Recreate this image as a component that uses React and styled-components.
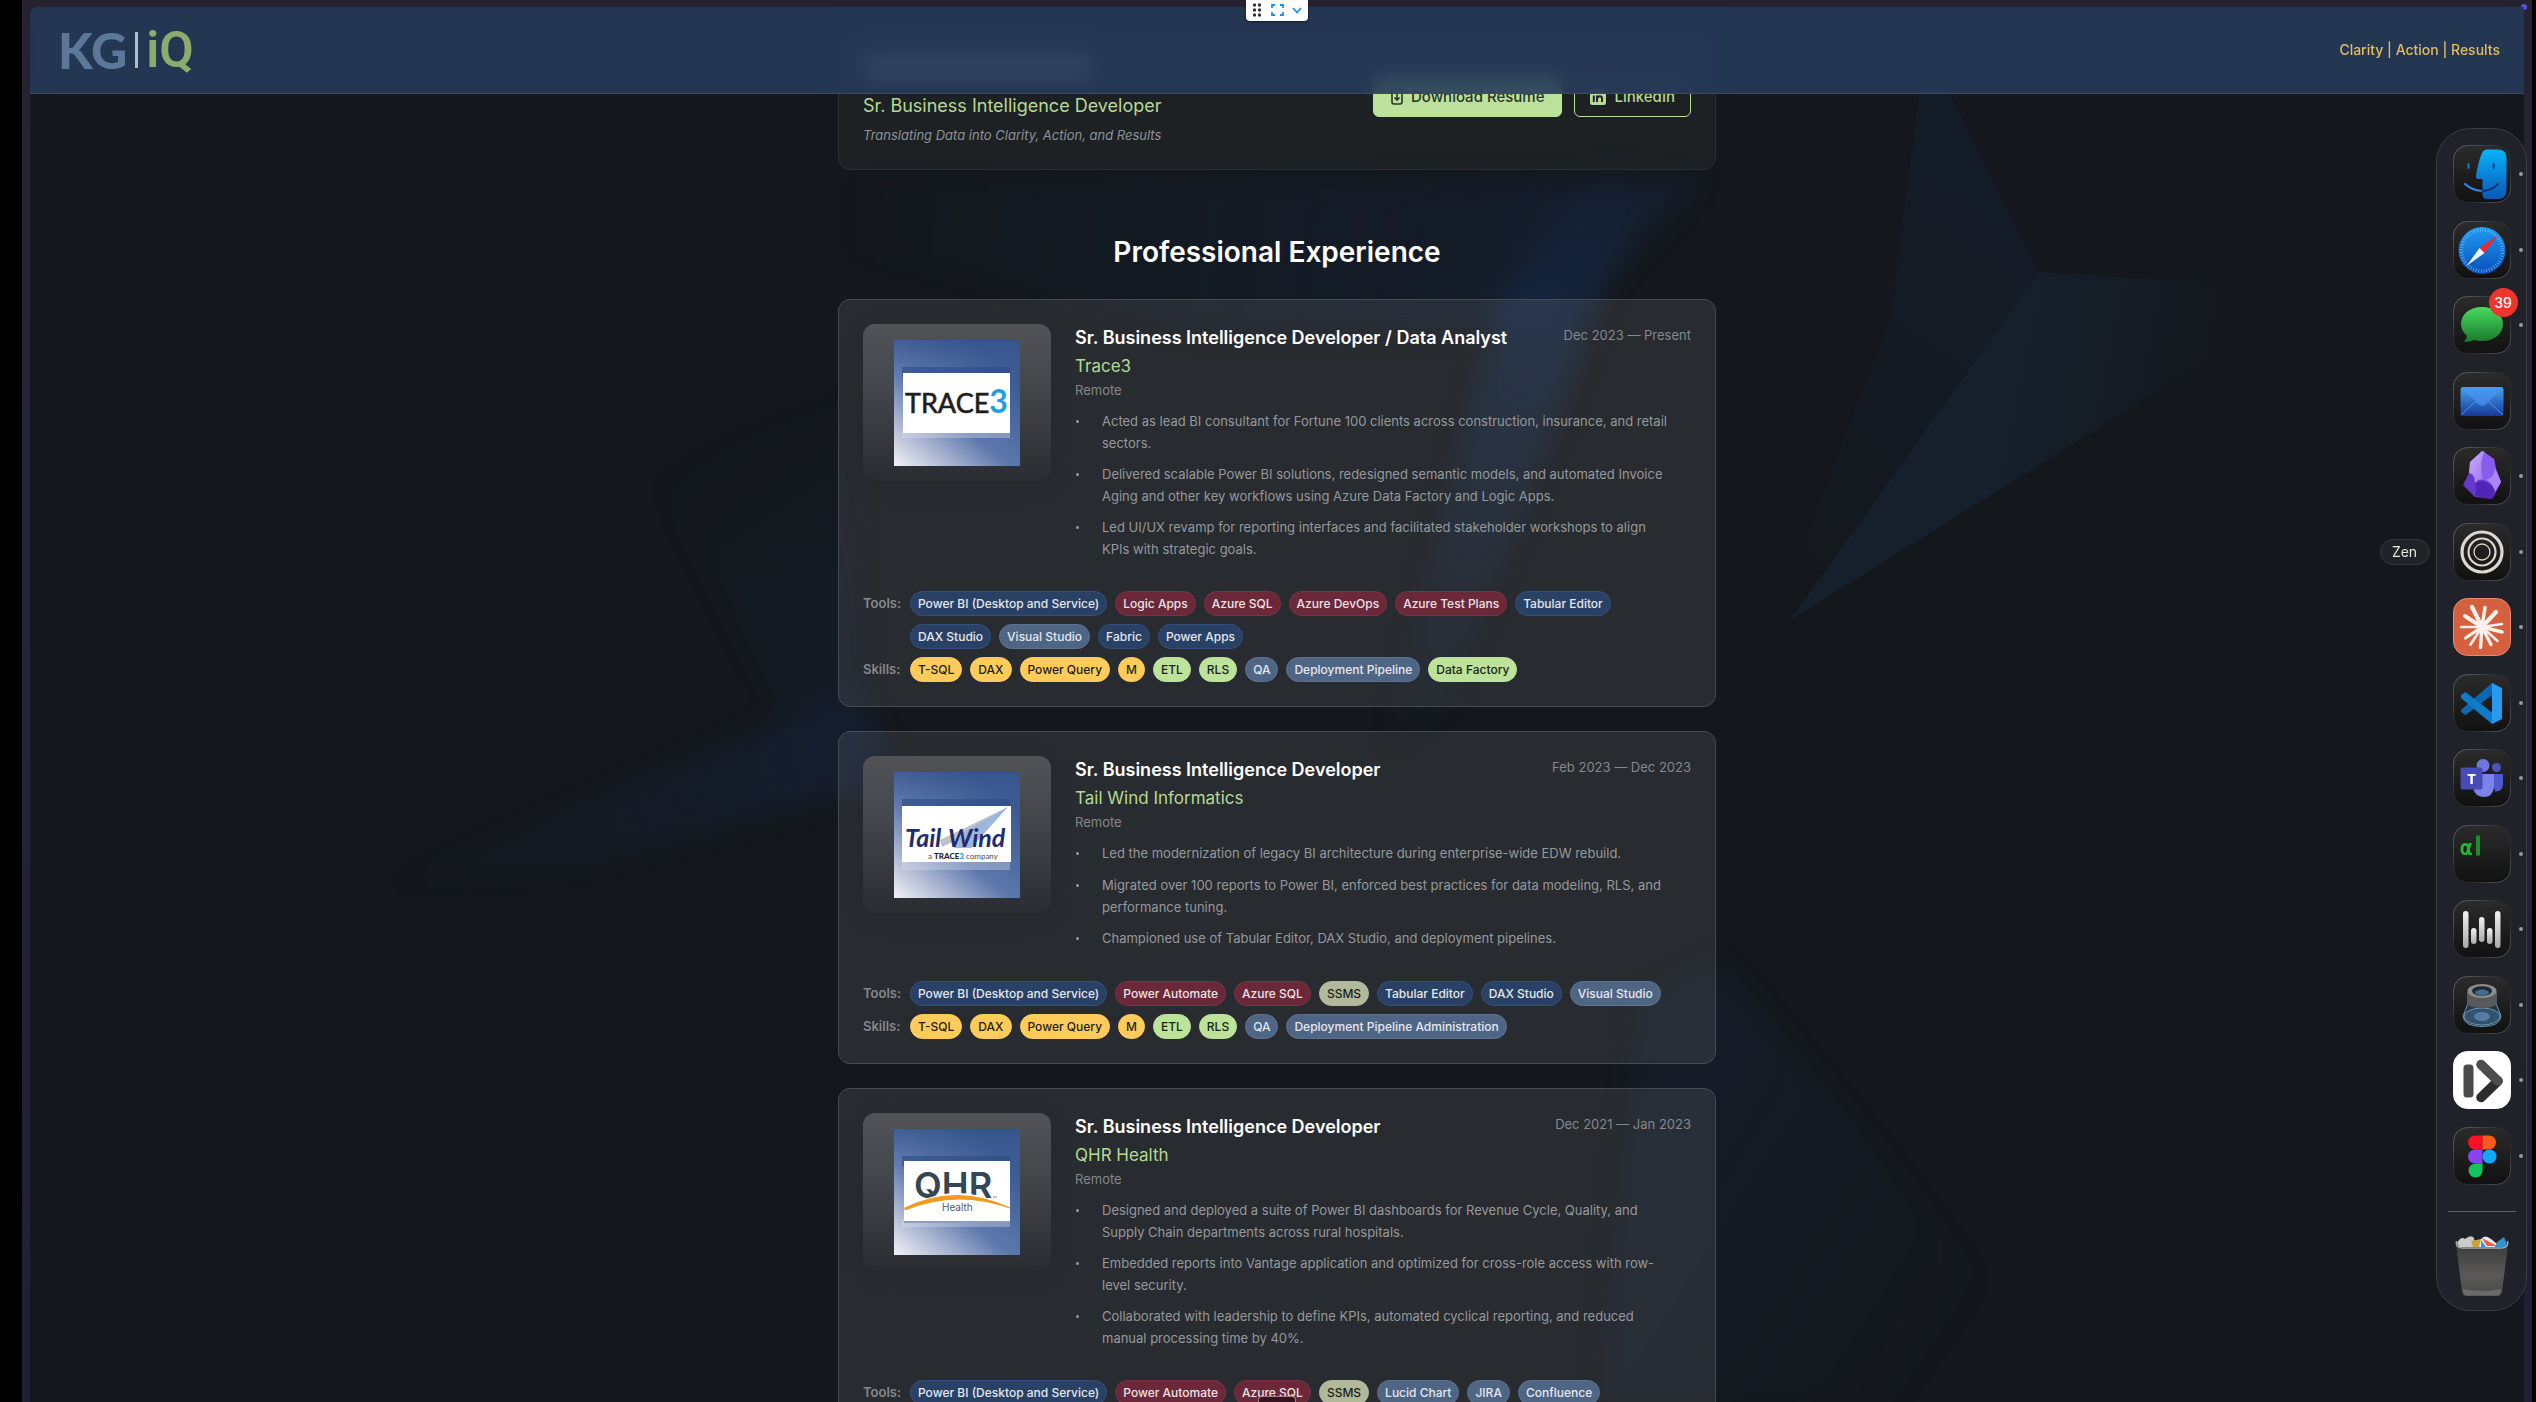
import React from "react";
import styled, { createGlobalStyle, css } from "styled-components";

const GlobalStyle = createGlobalStyle`
  * { box-sizing: border-box; }
  body {
    margin: 0;
    background: #000;
    overflow: hidden;
    font-family: Inter, "Liberation Sans", sans-serif;
    -webkit-font-smoothing: antialiased;
  }
  h1, h2, h3, p, ul { margin: 0; padding: 0; }
  ul { list-style: none; }
`;

/* ---------- window frame ---------- */

const Screen = styled.div`
  display: flex;
  height: 100vh;
  padding: 0 4px 0 22px;
  background: #000;
  overflow: hidden;
`;

const Frame = styled.div`
  flex: 1;
  display: flex;
  padding: 7px 8px 0;
  background: linear-gradient(180deg, #26222f, #252338 40%, #211f33);
`;

const Page = styled.div`
  position: relative;
  flex: 1;
  min-width: 0;
  overflow: hidden;
  border-top-left-radius: 6px;
  background: #14181c;
`;

const Backdrop = styled.svg`
  position: absolute;
  inset: 0;
  width: 100%;
  height: 100%;
`;

const WindowTab = styled.div`
  position: fixed;
  top: 0;
  left: 50%;
  transform: translateX(-22px);
  display: flex;
  z-index: 5;
  filter: drop-shadow(0 1px 1px rgba(0, 0, 0, 0.5));
`;

const CornerDot = styled.span`
  position: fixed;
  top: 4px;
  right: 9px;
  width: 6px;
  height: 6px;
  border-radius: 50%;
  background: #5b50e6;
`;

const CaptureHandle = styled.span`
  position: fixed;
  left: 50%;
  bottom: 0;
  width: 38px;
  height: 6px;
  margin-left: -10px;
  border: 1px solid #a08088;
  border-bottom: 0;
  border-radius: 4px 4px 0 0;
  background: #35121d;
`;

/* ---------- header ---------- */

const Header = styled.header`
  position: absolute;
  inset: 0 0 auto 0;
  z-index: 2;
  height: 87px;
  padding: 0 24px 0 28px;
  display: flex;
  align-items: center;
  justify-content: space-between;
  border-bottom: 1px solid #3c4b5e;
  background: rgba(38, 58, 90, 0.88);
  backdrop-filter: blur(10px);
`;

const Brand = styled.a`
  display: flex;
  align-items: center;
  color: #5b7898;
  font: 900 50px/60px Lato, sans-serif;
  text-decoration: none;
`;

const BrandBar = styled.span`
  width: 3px;
  height: 36px;
  margin: 0 8px;
  background: #b4bcc8;
`;

const BrandAccent = styled.span`
  color: #8cab6c;
  font-family: Roboto, sans-serif;
  font-weight: 600;
`;

const Motto = styled.p`
  color: #e3bd5f;
  font-size: 14px;
  font-weight: 500;
  line-height: 20px;
`;

/* ---------- page column ---------- */

const Column = styled.main`
  position: relative;
  max-width: 878px;
  margin: 0 auto;
  padding-top: 16px;
`;

const Hero = styled.section`
  display: flex;
  align-items: center;
  justify-content: space-between;
  padding: 24px;
  border: 1px solid #2c3036;
  border-radius: 12px;
  background: rgba(255, 255, 255, 0.04);
`;

const NameSmear = styled.div`
  width: 230px;
  height: 26px;
  margin: 6px 0 12px;
  border-radius: 8px;
  background: rgba(255, 255, 255, 0.45);
`;

const Role = styled.p`
  color: #b5da92;
  font-size: 18px;
  line-height: 28px;
`;

const Tagline = styled.p`
  margin-top: 5px;
  color: #8f9296;
  font-size: 13px;
  font-style: italic;
  line-height: 20px;
`;

const Actions = styled.div`
  display: flex;
  gap: 12px;
`;

const ActionButton = styled.button`
  display: flex;
  align-items: center;
  gap: 8px;
  height: 40px;
  padding: 0 ${(p) => (p.$filled ? 17 : 15)}px;
  border: 1px solid #bbe19a;
  border-radius: 6px;
  background: ${(p) => (p.$filled ? "#bbe19a" : "transparent")};
  color: ${(p) => (p.$filled ? "#26342c" : "#b5da92")};
  font: 500 15px/24px Inter, sans-serif;
`;

const SectionTitle = styled.h2`
  margin: 64px 0 29px;
  color: #fff;
  font-size: 28px;
  font-weight: 600;
  line-height: 36px;
  text-align: center;
`;

const Jobs = styled.div`
  display: flex;
  flex-direction: column;
  gap: 24px;
`;

const Card = styled.article`
  padding: 24px;
  border: 1px solid #464b51;
  border-radius: 12px;
  background: rgba(255, 255, 255, 0.085);
`;

const CardTop = styled.div`
  display: grid;
  grid-template-columns: 188px minmax(0, 1fr);
  align-items: start;
  gap: 24px;
`;

const LogoTile = styled.div`
  display: flex;
  justify-content: center;
  padding: 16px 0;
  border-radius: 12px;
  background: linear-gradient(180deg, #515357 0%, #43464b 40%, rgba(56, 58, 64, 0.5) 85%, rgba(50, 53, 58, 0) 100%);
  box-shadow: 0 4px 24px rgba(0, 0, 0, 0.08);
`;

const JobHead = styled.div`
  display: flex;
  justify-content: space-between;
  gap: 16px;
`;

const JobTitle = styled.h3`
  color: #fff;
  font-size: 18px;
  font-weight: 600;
  line-height: 28px;
`;

const Period = styled.span`
  color: #85888c;
  font-size: 13px;
  line-height: 22px;
`;

const Company = styled.p`
  color: #b5da92;
  font-size: 17px;
  line-height: 28px;
`;

const Place = styled.p`
  color: #85888c;
  font-size: 13px;
  line-height: 20px;
`;

const Points = styled.ul`
  display: flex;
  flex-direction: column;
  gap: 9px;
  margin-top: 10px;
  padding-right: 18px;
`;

const Point = styled.li`
  display: grid;
  grid-template-columns: 27px 1fr;
  color: #96999c;
  font-size: 13px;
  line-height: 22px;

  &::before {
    content: "";
    width: 3px;
    height: 3px;
    margin: 10px 1px;
    border-radius: 50%;
    background: #96999c;
  }
`;

const TagGroups = styled.div`
  display: flex;
  flex-direction: column;
  gap: 8px;
  margin-top: 31px;
`;

const TagRow = styled.div`
  display: grid;
  grid-template-columns: 47px minmax(0, 1fr);
`;

const TagLabel = styled.span`
  color: #85888c;
  font-size: 13px;
  font-weight: 600;
  line-height: 25px;
`;

const Tags = styled.div`
  display: flex;
  flex-wrap: wrap;
  gap: 8px;
`;

const tones = {
  navy: ["#2a4166", "#e4e8ee", "#32507c"],
  wine: ["#6b2839", "#eee2e6", "#7a3345"],
  slate: ["#4f6584", "#e4e8ee", "#5d7291"],
  gold: ["#ffcb5b", "#221d12", "#ffcb5b"],
  green: ["#bde39a", "#1b2416", "#bde39a"],
  sage: ["#b2b89a", "#1d1f18", "#b2b89a"],
};

const Tag = styled.span`
  padding: 0 7px;
  border: 1px solid ${(p) => tones[p.$tone][2]};
  border-radius: 13px;
  background: ${(p) => tones[p.$tone][0]};
  color: ${(p) => tones[p.$tone][1]};
  font-size: 12px;
  font-weight: 500;
  line-height: 23px;
  white-space: nowrap;
`;

/* ---------- dock ---------- */

const Dock = styled.nav`
  position: fixed;
  top: 128px;
  right: 9px;
  z-index: 4;
  width: 91px;
  height: 1183px;
  padding: 16px 15px 0 15px;
  display: flex;
  flex-direction: column;
  align-items: center;
  border: 1px solid #3a3d42;
  border-radius: 34px;
  background: #1f2228;
`;

const DockApps = styled.div`
  display: flex;
  flex-direction: column;
  justify-content: space-between;
  height: 1040px;
`;

const DockButton = styled.button`
  position: relative;
  width: 58px;
  height: 58px;
  padding: 0;
  border: 0;
  background: none;

  svg { display: block; overflow: visible; }

  ${(p) =>
    p.$running &&
    css`
      &::after {
        content: "";
        position: absolute;
        top: 27px;
        right: -12px;
        width: 4px;
        height: 4px;
        border-radius: 50%;
        background: #96989c;
      }
    `}
`;

const Badge = styled.span`
  position: absolute;
  top: -8px;
  right: -7px;
  width: 29px;
  height: 29px;
  border-radius: 50%;
  background: #ec352d;
  color: #fff;
  font: 500 14px/29px Inter, sans-serif;
  text-align: center;
`;

const DockRule = styled.hr`
  width: 68px;
  height: 1px;
  margin: 26px 0 23px;
  border: 0;
  background: #5b5e62;
  flex: none;
`;

const DockTip = styled.span`
  position: absolute;
  top: 16px;
  right: 81px;
  width: 50px;
  height: 26px;
  border: 1px solid #34383c;
  border-radius: 13px;
  background: #202327;
  color: #e6e6e6;
  font: 400 14px/24px Inter, sans-serif;
  text-align: center;
`;

/* ---------- logos ---------- */

const LogoPlate = ({ id, children }) => (
  <svg width="126" height="126" viewBox="0 0 126 126" role="img" aria-label={id}>
    <defs>
      <linearGradient id={`${id}-bg`} x1="0" y1="1" x2="0.75" y2="0.1">
        <stop offset="0" stopColor="#f2f2f8" />
        <stop offset="0.22" stopColor="#b3bcd6" />
        <stop offset="0.5" stopColor="#5d78ad" />
        <stop offset="1" stopColor="#3a5a91" />
      </linearGradient>
      <linearGradient id={`${id}-top`} x1="0" y1="0" x2="0" y2="1">
        <stop offset="0" stopColor="#2f4f86" />
        <stop offset="1" stopColor="#3c5c93" stopOpacity="0" />
      </linearGradient>
    </defs>
    <rect width="126" height="126" fill={`url(#${id}-bg)`} />
    <rect x="0" width="126" height="30" fill={`url(#${id}-top)`} opacity="0.5" />
    <rect x="8" y="27" width="108" height="10" fill="#2c4b80" opacity="0.6" />
    <rect x="8" y="90" width="108" height="8" fill="#dfe6f2" opacity="0.35" />
    {children}
  </svg>
);

const Trace3Logo = () => (
  <LogoPlate id="trace3">
    <rect x="9" y="33" width="107" height="60" fill="#fff" />
    <text x="11" y="73" fontFamily="Lato" fontSize="27" fill="#231c1e" stroke="#231c1e" strokeWidth="0.6">
      TRACE
      <tspan fontSize="32" fontWeight="700" fill="#1ba1e2" stroke="none">3</tspan>
    </text>
  </LogoPlate>
);

const TailWindLogo = () => (
  <LogoPlate id="tailwind">
    <rect x="8" y="34" width="109" height="56" fill="#fff" />
    <path d="M114 35 L46 68 L48 75 L84 58 Z" fill="#bfc1c9" />
    <path d="M114 35 L66 62 L60 76 L77 76 Z" fill="#9db7dc" />
    <text x="11" y="75" fontFamily="Lato" fontSize="25" fontWeight="700" fontStyle="italic" fill="#232a6e">Tail</text>
    <text x="54" y="75" fontFamily="Lato" fontSize="25" fontWeight="700" fontStyle="italic" fill="#232a6e">Wind</text>
    <text x="34" y="87" fontFamily="Lato" fontSize="8" fill="#4b4b52">
      a <tspan fontWeight="900" fill="#2b2527">TRACE</tspan>
      <tspan fontWeight="900" fill="#1ba1e2">3</tspan> company
    </text>
  </LogoPlate>
);

const QhrLogo = () => (
  <LogoPlate id="qhr">
    <rect x="10" y="32" width="106" height="60" fill="#fff" />
    <text x="20" y="69" fontFamily="Inter" fontSize="36" fontWeight="600" fill="#344754">QHR</text>
    <path d="M11 80 Q63 48 116 80 L116 94 H11 Z" fill="#fff" />
    <path d="M11 79 Q62 54 116 79 Q62 60 11 81 Z" fill="#f29a1f" stroke="#f29a1f" strokeWidth="1.2" />
    <rect x="10" y="81" width="106" height="11" fill="#fff" />
    <rect x="10" y="92" width="106" height="2" fill="#8d9cc0" />
    <text x="48" y="82" fontFamily="Inter" fontSize="10" fill="#4d5a66">Health</text>
    <path d="M99 68 h4" stroke="#8b949c" strokeWidth="1" />
  </LogoPlate>
);

/* ---------- dock drawings ---------- */

const AppTile = ({ fill = "url(#tileDark)", edge = "url(#tileEdge)", children }) => (
  <svg width="58" height="58" viewBox="0 0 58 58" aria-hidden="true">
    <rect x="0.5" y="0.5" width="57" height="57" rx="14" fill={fill} stroke={edge} />
    {children}
  </svg>
);

const DockDefs = () => (
  <svg width="0" height="0" style={{ position: "absolute" }} aria-hidden="true">
    <defs>
      <linearGradient id="tileDark" x1="0" y1="0" x2="0" y2="1">
        <stop offset="0" stopColor="#2b2b2c" />
        <stop offset="1" stopColor="#111112" />
      </linearGradient>
      <linearGradient id="tileEdge" x1="0" y1="0" x2="1" y2="1">
        <stop offset="0" stopColor="#66686b" />
        <stop offset="0.4" stopColor="#2a2c2f" />
        <stop offset="0.7" stopColor="#2a2c2f" />
        <stop offset="1" stopColor="#5c5e61" />
      </linearGradient>
      <linearGradient id="finder" x1="0" y1="0" x2="0" y2="1">
        <stop offset="0" stopColor="#05b4fb" />
        <stop offset="1" stopColor="#0d56b6" />
      </linearGradient>
      <linearGradient id="safari" x1="0" y1="0" x2="0" y2="1">
        <stop offset="0" stopColor="#1d9bf5" />
        <stop offset="1" stopColor="#0a50b8" />
      </linearGradient>
      <linearGradient id="bubble" x1="0" y1="0" x2="0" y2="1">
        <stop offset="0" stopColor="#46dc5f" />
        <stop offset="1" stopColor="#1b7a2c" />
      </linearGradient>
      <linearGradient id="mail" x1="0" y1="0" x2="0" y2="1">
        <stop offset="0" stopColor="#46a3ee" />
        <stop offset="1" stopColor="#17389a" />
      </linearGradient>
      <linearGradient id="bars" x1="0" y1="0" x2="0" y2="1">
        <stop offset="0" stopColor="#f2f2f2" />
        <stop offset="1" stopColor="#a9a9a9" />
      </linearGradient>
      <linearGradient id="bin" x1="0" y1="0" x2="0" y2="1">
        <stop offset="0" stopColor="#3c3c3d" />
        <stop offset="0.6" stopColor="#5a5958" />
        <stop offset="1" stopColor="#4a4a4a" />
      </linearGradient>
      <linearGradient id="crystal" x1="0" y1="0" x2="1" y2="1">
        <stop offset="0" stopColor="#c9b0fb" />
        <stop offset="1" stopColor="#9a72ee" />
      </linearGradient>
    </defs>
  </svg>
);

const Finder = () => (
  <AppTile>
    <path d="M34 4.500 H46 Q53.500 5 53.500 13 V45 Q53.500 54 45 54 H34 Q29.500 54 29.500 49 V34 H25 Q22.500 33.500 23 31 Q25 17 29 8 Q30.500 4.500 34 4.500 Z" fill="url(#finder)" />
    <path d="M15.500 19 v4" stroke="#1b74c4" strokeWidth="2.200" strokeLinecap="round" />
    <path d="M40.700 19 v4" stroke="#0c3f80" strokeWidth="2.200" strokeLinecap="round" />
    <path d="M12 39 Q20 46 29.500 46" fill="none" stroke="#2b8ce0" strokeWidth="2.200" strokeLinecap="round" />
    <path d="M29.500 46 Q38 46 45 39" fill="none" stroke="#0b3874" strokeWidth="2.200" strokeLinecap="round" />
  </AppTile>
);

const Safari = () => (
  <AppTile>
    <circle cx="29" cy="29.500" r="23.500" fill="url(#safari)" />
    <circle cx="29" cy="29.500" r="20.500" fill="none" stroke="#8cc4f5" strokeWidth="3.500" strokeDasharray="0.8 1.880" opacity="0.75" />
    <path d="M45 14 L31.500 32 L26.500 27 Z" fill="#f5252c" />
    <path d="M13.500 45 L26.500 27 L31.500 32 Z" fill="#eef3f7" />
  </AppTile>
);

const Messages = () => (
  <AppTile>
    <path d="M29 11 C41 11 50 18 50 28 C50 38 41 45 29 45 C26 45 23.500 44.800 21 44 C18 45.500 14.500 46 11 45.500 C13 43.500 13.800 41.500 13.800 39.500 C10 36.500 8 32.500 8 28 C8 18 17 11 29 11 Z" fill="url(#bubble)" />
  </AppTile>
);

const Mail = () => (
  <AppTile>
    <rect x="7.500" y="15" width="43" height="29" rx="3" fill="url(#mail)" />
    <path d="M8 43 L23 29 M50 43 L35 29" stroke="#5a95ea" strokeWidth="1" />
    <path d="M8.500 15.500 L25 32 Q29 35.500 33 32 L49.500 15.500 Z" fill="#4a93f3" opacity="0.75" />
  </AppTile>
);

const Obsidian = () => (
  <AppTile>
    <path d="M29 4 L41 12 L43 22 L48 35 L41 49 L39 52 L22 50 L10 38 L16 26 L17 15 Z" fill="#6437cf" />
    <path d="M29 4 L17 15 L16 26 Q22 27 22 36 Q26 31 30 33 Q27 16 32 5 Z" fill="url(#crystal)" />
    <path d="M31 5 L41 12 L43 22 L48 35 L42 45 Q39 33 30 33 Q26 17 31 5 Z" fill="#8a5ced" />
    <path d="M42 21 L48 35 L42 45 Q40 36 33 33 Q42 30 42 21 Z" fill="#a985f6" />
    <path d="M22 36 Q35 31 42 44 L39 52 L22 49 Q24 42 22 36 Z" fill="#5125b6" />
  </AppTile>
);

const Zen = () => (
  <AppTile>
    <g fill="none" stroke="#dcd8cd">
      <circle cx="29" cy="29" r="20" strokeWidth="3.200" />
      <circle cx="29" cy="29" r="13.500" strokeWidth="2.200" />
      <circle cx="29" cy="29" r="8" strokeWidth="1.300" />
    </g>
  </AppTile>
);

const rays = [
  [19, 9, 4.2], [32, 9.5, 3.4], [43, 14, 4.2], [49, 26, 2.6],
  [49, 34, 3.4], [44.5, 43, 2.4], [38, 46.5, 3.2], [27.5, 49.5, 3.4],
  [17.5, 46.5, 2.8], [12.5, 40, 3.2], [8, 29, 2.4], [12, 18, 4],
];

const Claude = () => (
  <AppTile fill="#d5603f" edge="#e68b6f">
    <g stroke="#fbf1ea" strokeLinecap="round">
      {rays.map(([x, y, w]) => (
        <line key={`${x}-${y}`} x1="29" y1="29" x2={x} y2={y} strokeWidth={w} />
      ))}
    </g>
  </AppTile>
);

const VsCode = () => (
  <AppTile>
    <path d="M39 9 L8 36 V38 L12.500 41 L39 21 Z" fill="#0a69b4" />
    <path d="M8 21 L12.500 18 L39 38.500 V50 L8 24 Z" fill="#0f7ac8" />
    <path d="M39 9 L49 14 V45 L39 50 Z" fill="#279af0" />
  </AppTile>
);

const Teams = () => (
  <AppTile>
    <circle cx="30" cy="16.500" r="6.500" fill="#6f77e0" />
    <circle cx="43.500" cy="18.500" r="4.500" fill="#4c53bd" />
    <path d="M38 25 H50 V36 Q49 43 42 42.500 Z" fill="#5059c9" />
    <path d="M22 25 H41 V38 Q40 48 30.500 48 Q22 47.500 20.500 40 Z" fill="#7b83eb" />
    <rect x="7.500" y="18.500" width="22" height="22" rx="2" fill="#464bb5" />
    <text x="18.500" y="35" textAnchor="middle" fontFamily="Open Sans" fontWeight="700" fontSize="15" fill="#fff">T</text>
  </AppTile>
);

const Terminal = () => (
  <AppTile>
    <text x="7" y="30" fontFamily="DejaVu Sans Mono" fontWeight="700" fontSize="21" fill="#1dba2b">α</text>
    <rect x="23" y="10.500" width="4" height="20" fill="#1d8f28" />
  </AppTile>
);

const Waves = () => (
  <AppTile>
    <g fill="url(#bars)">
      <rect x="10" y="11" width="5.500" height="37" rx="2.700" />
      <rect x="18" y="28" width="5.500" height="16" rx="2.700" />
      <rect x="26" y="17" width="5.500" height="25" rx="2.700" />
      <rect x="34" y="28" width="5.500" height="16" rx="2.700" />
      <rect x="42" y="11" width="5.500" height="37" rx="2.700" />
    </g>
  </AppTile>
);

const Loupe = () => (
  <AppTile>
    <path d="M16 25 L10 40 Q11 50.500 29 50.500 Q47 50.500 48 40 L42 25 Z" fill="#24384b" stroke="#6c96b4" strokeWidth="1" />
    <ellipse cx="29" cy="40.500" rx="18" ry="8.500" fill="#31516d" stroke="#7ea6c2" strokeWidth="0.800" />
    <ellipse cx="29" cy="40.500" rx="8" ry="4.500" fill="#527da3" />
    <path d="M14 16 V28 Q18 32 29 32 Q40 32 44 28 V16 Z" fill="#58595b" />
    <ellipse cx="29" cy="15" rx="14.500" ry="7" fill="#8a8c8e" />
    <ellipse cx="29" cy="15" rx="10" ry="4.800" fill="#23272c" />
    <ellipse cx="29" cy="16.500" rx="7" ry="3" fill="#3f6d91" />
  </AppTile>
);

const PlayD = () => (
  <AppTile fill="#fff" edge="#fff">
    <rect x="10.500" y="13.500" width="10" height="33" rx="3.500" fill="#4a4a4a" />
    <path d="M28 46.500 L45 30" stroke="#2d2d2d" strokeWidth="9.500" strokeLinecap="round" />
    <path d="M28 13.500 L45 30" stroke="#4d4d4d" strokeWidth="9.500" strokeLinecap="round" />
  </AppTile>
);

const Figma = () => (
  <AppTile>
    <path d="M29.500 8.500 H22 a7 7 0 0 0 0 14 h7.500 Z" fill="#fb0f27" />
    <path d="M29.500 8.500 H36 a7 7 0 0 1 0 14 h-6.500 Z" fill="#fa5a1c" />
    <path d="M29.500 22.500 H22 a7 7 0 0 0 0 14 h7.500 Z" fill="#8743f5" />
    <circle cx="36.500" cy="29.500" r="7" fill="#0fa9f7" />
    <path d="M29.500 36.500 H22 a7 7 0 1 0 7.500 7 Z" fill="#0fc55c" />
  </AppTile>
);

const Trash = () => (
  <svg width="54" height="62" viewBox="0 0 54 62" aria-hidden="true">
    <path d="M2 8 Q6 1 10 4 Q16 -1 19 3 L20 12 H4 Z" fill="#c9cacb" />
    <path d="M16 6 L26 4 L30 12 H18 Z" fill="#c7a234" />
    <path d="M26 4 Q30 -1 36 4 L46 12 H24 Z" fill="#e9e7ef" />
    <path d="M27 3 L42 11 H32 Z" fill="#ef5a4a" />
    <path d="M26 5 L31 12 H26 Z" fill="#3a8ff0" />
    <path d="M42 7 L49 2 L52 9 L50 12 H40 Z" fill="#3790cf" />
    <path d="M1 9 Q2 13 8 13 H46 Q52 13 53 9 L47 57 Q46.500 61 42 61 H12 Q7.500 61 7 57 Z" fill="url(#bin)" />
    <path d="M1.500 6 Q0 13 8 13 H46 Q54 13 52.500 6" fill="none" stroke="#a6a7a8" strokeWidth="1.400" />
    <path d="M8 54 Q27 58 46 54 L45.500 58 Q45 60.500 42 60.500 H12 Q9 60.500 8.500 58 Z" fill="#6a6a6a" />
  </svg>
);

const apps = [
  { name: "Finder", Icon: Finder, running: true },
  { name: "Safari", Icon: Safari, running: true },
  { name: "Messages", Icon: Messages, running: true, badge: 39 },
  { name: "Mail", Icon: Mail },
  { name: "Obsidian", Icon: Obsidian, running: true },
  { name: "Zen", Icon: Zen, running: true, tip: true },
  { name: "Claude", Icon: Claude, running: true },
  { name: "Visual Studio Code", Icon: VsCode, running: true },
  { name: "Teams", Icon: Teams, running: true },
  { name: "Terminal", Icon: Terminal, running: true },
  { name: "Audio", Icon: Waves, running: true },
  { name: "Preview", Icon: Loupe, running: true },
  { name: "Player", Icon: PlayD, running: true },
  { name: "Figma", Icon: Figma, running: true },
];

/* ---------- content ---------- */

const jobs = [
  {
    title: "Sr. Business Intelligence Developer / Data Analyst",
    company: "Trace3",
    period: "Dec 2023 — Present",
    Logo: Trace3Logo,
    points: [
      "Acted as lead BI consultant for Fortune 100 clients across construction, insurance, and retail sectors.",
      "Delivered scalable Power BI solutions, redesigned semantic models, and automated Invoice Aging and other key workflows using Azure Data Factory and Logic Apps.",
      "Led UI/UX revamp for reporting interfaces and facilitated stakeholder workshops to align KPIs with strategic goals.",
    ],
    tools: [
      ["Power BI (Desktop and Service)", "navy"], ["Logic Apps", "wine"], ["Azure SQL", "wine"],
      ["Azure DevOps", "wine"], ["Azure Test Plans", "wine"], ["Tabular Editor", "navy"],
      ["DAX Studio", "navy"], ["Visual Studio", "slate"], ["Fabric", "navy"], ["Power Apps", "navy"],
    ],
    skills: [
      ["T-SQL", "gold"], ["DAX", "gold"], ["Power Query", "gold"], ["M", "gold"], ["ETL", "green"],
      ["RLS", "green"], ["QA", "slate"], ["Deployment Pipeline", "slate"], ["Data Factory", "green"],
    ],
  },
  {
    title: "Sr. Business Intelligence Developer",
    company: "Tail Wind Informatics",
    period: "Feb 2023 — Dec 2023",
    Logo: TailWindLogo,
    points: [
      "Led the modernization of legacy BI architecture during enterprise-wide EDW rebuild.",
      "Migrated over 100 reports to Power BI, enforced best practices for data modeling, RLS, and performance tuning.",
      "Championed use of Tabular Editor, DAX Studio, and deployment pipelines.",
    ],
    tools: [
      ["Power BI (Desktop and Service)", "navy"], ["Power Automate", "wine"], ["Azure SQL", "wine"],
      ["SSMS", "sage"], ["Tabular Editor", "navy"], ["DAX Studio", "navy"], ["Visual Studio", "slate"],
    ],
    skills: [
      ["T-SQL", "gold"], ["DAX", "gold"], ["Power Query", "gold"], ["M", "gold"], ["ETL", "green"],
      ["RLS", "green"], ["QA", "slate"], ["Deployment Pipeline Administration", "slate"],
    ],
  },
  {
    title: "Sr. Business Intelligence Developer",
    company: "QHR Health",
    period: "Dec 2021 — Jan 2023",
    Logo: QhrLogo,
    points: [
      "Designed and deployed a suite of Power BI dashboards for Revenue Cycle, Quality, and Supply Chain departments across rural hospitals.",
      "Embedded reports into Vantage application and optimized for cross-role access with row-level security.",
      "Collaborated with leadership to define KPIs, automated cyclical reporting, and reduced manual processing time by 40%.",
    ],
    tools: [
      ["Power BI (Desktop and Service)", "navy"], ["Power Automate", "wine"], ["Azure SQL", "wine"],
      ["SSMS", "sage"], ["Lucid Chart", "slate"], ["JIRA", "slate"], ["Confluence", "slate"],
    ],
    skills: [],
  },
];

const TagGroup = ({ label, items }) => (
  <TagRow>
    <TagLabel>{label}</TagLabel>
    <Tags>
      {items.map(([text, tone]) => (
        <Tag key={text} $tone={tone}>{text}</Tag>
      ))}
    </Tags>
  </TagRow>
);

const JobCard = ({ title, company, period, Logo, points, tools, skills }) => (
  <Card>
    <CardTop>
      <LogoTile><Logo /></LogoTile>
      <div>
        <JobHead>
          <JobTitle>{title}</JobTitle>
          <Period>{period}</Period>
        </JobHead>
        <Company>{company}</Company>
        <Place>Remote</Place>
        <Points>
          {points.map((text) => (
            <Point key={text}>{text}</Point>
          ))}
        </Points>
      </div>
    </CardTop>
    <TagGroups>
      <TagGroup label="Tools:" items={tools} />
      {skills.length > 0 && <TagGroup label="Skills:" items={skills} />}
    </TagGroups>
  </Card>
);

const Fade = ({ id, from, to, color, peak = 0.5, mid }) => (
  <linearGradient id={id} gradientUnits="userSpaceOnUse" x1={from[0]} y1={from[1]} x2={to[0]} y2={to[1]}>
    <stop offset="0" stopColor={color} stopOpacity={mid ? 0 : peak} />
    {mid && <stop offset={mid} stopColor={color} stopOpacity={peak} />}
    <stop offset="1" stopColor={color} stopOpacity="0" />
  </linearGradient>
);

const Facets = () => (
  <Backdrop viewBox="30 7 2494 1395" preserveAspectRatio="none" aria-hidden="true">
    <defs>
      <Fade id="f1" from={[1600, 250]} to={[800, 180]} color="#142544" peak={0.4} />
      <Fade id="f2" from={[1640, 160]} to={[1380, 760]} color="#18305a" peak={0.45} mid={0.3} />
      <Fade id="f3" from={[860, 720]} to={[380, 890]} color="#15264a" peak={0.42} />
      <Fade id="f4" from={[840, 700]} to={[680, 460]} color="#15264a" peak={0.2} />
      <Fade id="f5" from={[2040, 250]} to={[1800, 600]} color="#142848" peak={0.25} />
      <Fade id="f6" from={[2030, 290]} to={[2220, 330]} color="#173556" peak={0.45} />
      <Fade id="f7" from={[1700, 1120]} to={[1980, 1300]} color="#162744" peak={0.25} />
      <filter id="soft" colorInterpolationFilters="sRGB" x="-10%" y="-10%" width="120%" height="120%">
        <feGaussianBlur stdDeviation="12" />
      </filter>
    </defs>
    <g filter="url(#soft)">
      <path d="M857 180 H1700 L1560 330 H1200 L857 250 Z" fill="url(#f1)" />
      <path d="M1640 110 L1500 300 L1380 760 L1450 700 L1600 299 L1690 130 Z" fill="url(#f2)" />
      <path d="M857 690 L380 890 L590 862 L900 780 Z" fill="url(#f3)" />
      <path d="M857 400 L650 470 L790 720 L857 690 Z" fill="url(#f4)" />
      <path d="M1716 960 L1990 1290 L1900 1402 H1600 L1640 1000 Z" fill="url(#f7)" />
    </g>
    <path d="M1948 90 L2040 272 L1750 680 L1890 320 L1920 90 Z" fill="url(#f5)" />
    <path d="M2040 272 L2320 290 L1790 620 Z" fill="url(#f6)" opacity="0.6" />
  </Backdrop>
);

export default function App() {
  return (
    <Screen>
      <GlobalStyle />
      <DockDefs />
      <Frame>
        <Page>
          <Facets />
          <Header>
            <Brand href="#top" aria-label="KG iQ">
              KG<BrandBar /><BrandAccent>iQ</BrandAccent>
            </Brand>
            <Motto>Clarity | Action | Results</Motto>
          </Header>
          <Column>
            <Hero>
              <div>
                <NameSmear />
                <Role>Sr. Business Intelligence Developer</Role>
                <Tagline>Translating Data into Clarity, Action, and Results</Tagline>
              </div>
              <Actions>
                <ActionButton $filled>
                  <svg width="12" height="18" viewBox="0 0 12 18" fill="none" stroke="currentColor" strokeWidth="1.600" aria-hidden="true">
                    <rect x="1" y="1" width="10" height="15" rx="2" />
                    <path d="M6 5 v7 M3.500 9.500 l2.500 2.500 l2.500 -2.500" />
                  </svg>
                  Download Resume
                </ActionButton>
                <ActionButton>
                  <svg width="16" height="16" viewBox="0 0 16 16" aria-hidden="true">
                    <rect width="16" height="16" rx="2.500" fill="#b5da92" />
                    <path d="M3.800 6.500 V13 M7 13 V6.500 M7 9.500 Q7.500 7.200 9.800 7.200 Q12 7.200 12 9.500 V13" fill="none" stroke="#1d2026" strokeWidth="1.900" />
                    <circle cx="3.800" cy="3.900" r="1.200" fill="#1d2026" />
                  </svg>
                  LinkedIn
                </ActionButton>
              </Actions>
            </Hero>
            <SectionTitle>Professional Experience</SectionTitle>
            <Jobs>
              {jobs.map((job) => (
                <JobCard key={job.company} {...job} />
              ))}
            </Jobs>
          </Column>
        </Page>
      </Frame>
      <WindowTab>
        <svg width="62" height="21" viewBox="0 0 62 21" aria-hidden="true">
          <path d="M0 0 H62 V17 Q62 21 58 21 H4 Q0 21 0 17 Z" fill="#fff" />
          <g fill="#333">
            {[5, 10, 15].map((y) => (
              <React.Fragment key={y}>
                <circle cx="8.500" cy={y} r="1.700" />
                <circle cx="13.500" cy={y} r="1.700" />
              </React.Fragment>
            ))}
          </g>
          <path d="M26 8 V5 H29 M34 5 H37 V8 M37 12 V15 H34 M29 15 H26 V12 M47 8 L51 12.500 L55 8" fill="none" stroke="#1a8fee" strokeWidth="1.800" />
        </svg>
      </WindowTab>
      <CornerDot />
      <CaptureHandle />
      <Dock aria-label="Dock">
        <DockApps>
          {apps.map(({ name, Icon, running, badge, tip }) => (
            <DockButton key={name} $running={running} aria-label={name}>
              <Icon />
              {badge && <Badge>{badge}</Badge>}
              {tip && <DockTip>{name}</DockTip>}
            </DockButton>
          ))}
        </DockApps>
        <DockRule />
        <Trash />
      </Dock>
    </Screen>
  );
}
